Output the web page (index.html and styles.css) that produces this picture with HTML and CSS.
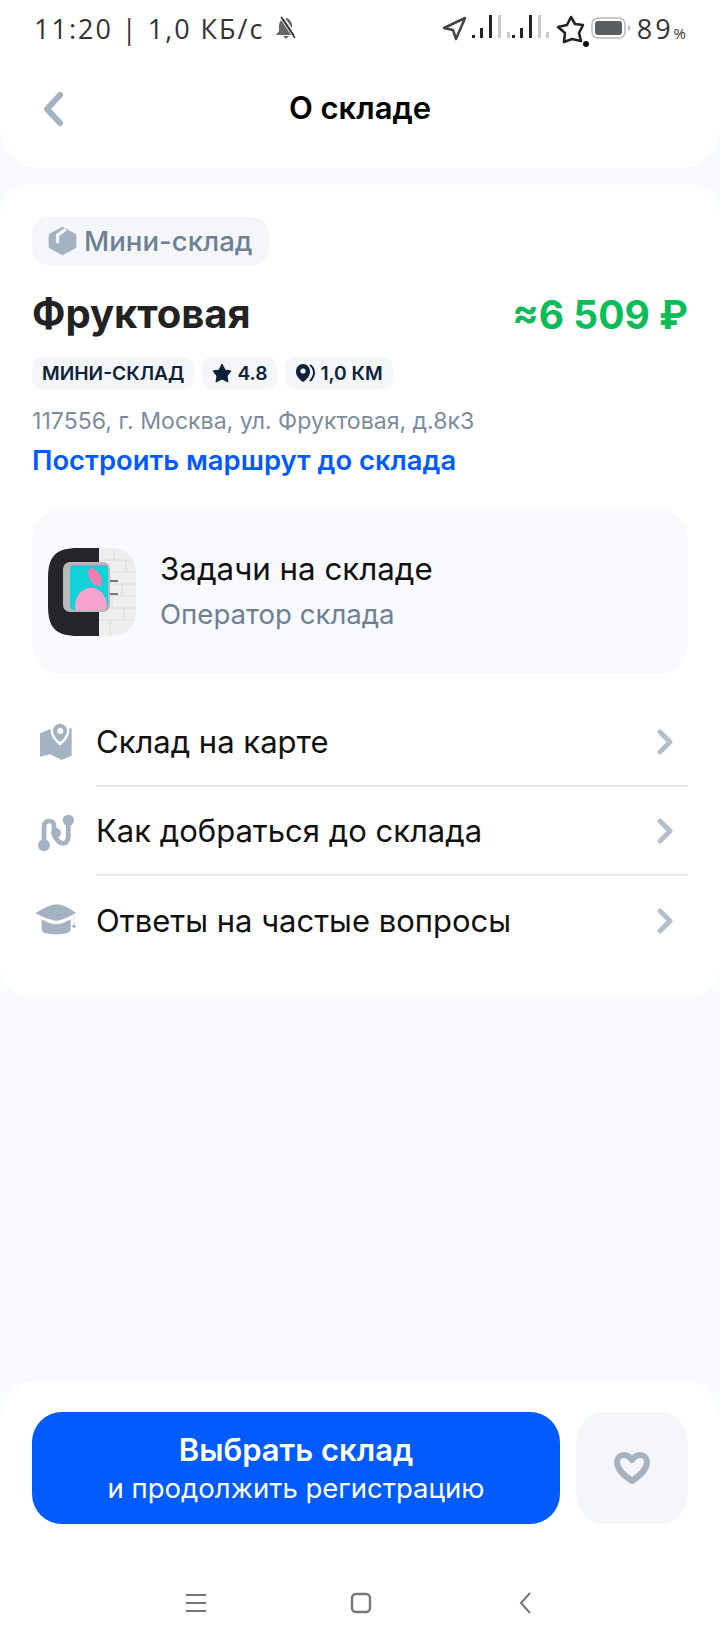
FILE: index.html
```html
<!DOCTYPE html>
<html>
<head>
  <title>О складе</title>
  <link rel="stylesheet" href="styles.css">
</head>
<body>
  <div class="top">
    <div class="status">
      <div class="status-left">
        <span class="status-text">11:20 | 1,0 КБ/с</span>
        <svg class="bell" width="22" height="24" viewBox="0 0 22 24"><path d="M10 2c-4 1-6 4-6 8v5l-3 4h19l-3-4v-5c0-4-2-7-6-8z" fill="#666"/><path d="M8 20h6l-3 3z" fill="#666"/><path d="M5 1l14 21M8 0l14 21" stroke="#fff" stroke-width="1.5"/><path d="M6 1l14 21" stroke="#333" stroke-width="1.5"/></svg>
      </div>
      <div class="status-right">
        <svg width="25" height="25" viewBox="0 0 25 25"><path d="M23 2L2 12l9 2 3 9z" fill="none" stroke="#444" stroke-width="2.5" stroke-linejoin="round"/></svg>
        <svg class="signal" width="78" height="26" viewBox="0 0 78 26">
          <g fill="#222"><rect x="1" y="20" width="3" height="3"/><rect x="9" y="13" width="3" height="10"/><rect x="18" y="0" width="3" height="23"/><rect x="41" y="20" width="3" height="3"/><rect x="49" y="13" width="3" height="10"/><rect x="58" y="0" width="3" height="23"/></g>
          <g fill="#ccc"><rect x="27" y="0" width="3" height="23"/><rect x="36" y="17" width="3" height="6"/><rect x="67" y="0" width="3" height="23"/><rect x="75" y="17" width="3" height="6"/></g>
        </svg>
        <svg class="star" width="36" height="34" viewBox="0 0 36 34"><path d="M16 3l4 7 8 1-4 8 2 8-9-2-8 3 1-9-7-6 9-2z" fill="none" stroke="#222" stroke-width="2.6" stroke-linejoin="round"/><circle cx="31" cy="30" r="3" fill="#111"/></svg>
        <svg class="battery" width="40" height="22" viewBox="0 0 40 22"><rect x="1" y="1" width="33" height="20" rx="6" fill="#fff" stroke="#bbb" stroke-width="1.5"/><rect x="4" y="4" width="27" height="14" rx="3" fill="#585e62"/><path d="M37 8l3 3-3 3z" fill="#bbb"/></svg>
        <span class="status-text batt">89<small>%</small></span>
      </div>
    </div>
    <div class="head">
      <svg class="back" width="30" height="40" viewBox="0 0 30 40"><path d="M22 6L9 20l13 14" fill="none" stroke="#a4b2c1" stroke-width="6" stroke-linecap="round" stroke-linejoin="round"/></svg>
      <div class="head-title">О складе</div>
    </div>
  </div>

  <div class="card">
    <div class="chip">
      <svg width="29" height="30" viewBox="46 36 88 90"><path d="M90 38l38 20q4 2 4 7v32q0 5-4 7l-38 20-38-20q-4-2-4-7V65q0-5 4-7z" fill="#a4b2c1"/><path d="M100 46L75 63v24" fill="none" stroke="#f4f6fa" stroke-width="10"/></svg>
      <span>Мини-склад</span>
    </div>

    <div class="title-row">
      <div class="name">Фруктовая</div>
      <div class="price">≈6 509 ₽</div>
    </div>

    <div class="tags">
      <div class="tag">МИНИ-СКЛАД</div>
      <div class="tag">
        <svg width="20" height="20" viewBox="0 0 20 20"><path d="M10 1l3 6 6 1-4 5 1 6-6-3-6 3 1-6-4-5 6-1z" fill="#0d2238" stroke="#0d2238" stroke-linejoin="round"/></svg>
        4.8
      </div>
      <div class="tag">
        <svg width="20" height="20" viewBox="0 0 20 20"><path d="M8 1c4 0 7 3 7 8 0 4-4 8-7 10-3-2-7-6-7-10 0-5 3-8 7-8z" fill="#0d2238"/><circle cx="8" cy="8" r="2.6" fill="#f4f6fa"/><path d="M15 2c3 2 4 5 4 8s-2 6-4 8" fill="none" stroke="#0d2238" stroke-width="2"/></svg>
        1,0 КМ
      </div>
    </div>

    <div class="address">117556, г. Москва, ул. Фруктовая, д.8к3</div>
    <div class="route">Построить маршрут до склада</div>

    <div class="tasks">
      <svg class="app" width="88" height="88" viewBox="0 0 88 88">
        <defs>
          <clipPath id="squircle"><path d="M30 0h28c22 0 30 8 30 30v28c0 22-8 30-30 30H30C8 88 0 80 0 58V30C0 8 8 0 30 0z"/></clipPath>
          <clipPath id="panel"><rect x="22" y="17" width="38" height="45" rx="4"/></clipPath>
        </defs>
        <g clip-path="url(#squircle)">
          <rect width="51" height="88" fill="#232528"/>
          <rect x="51" width="37" height="88" fill="#eeeeee"/>
          <path d="M51 12h37M51 24h37M51 36h37M51 48h37M51 60h37M51 72h37M66 0v12M78 12v12M62 24v12M74 36v12M64 48v12M76 60v12M62 72v16" stroke="#dedede" stroke-width="1"/>
          <rect x="15" y="14" width="47" height="50" rx="7" fill="#b8b9ba"/>
          <rect x="62" y="32" width="8" height="2" fill="#777"/>
          <rect x="62" y="45" width="8" height="2" fill="#777"/>
          <rect x="22" y="17" width="38" height="45" rx="4" fill="#10d3da"/>
          <g clip-path="url(#panel)">
            <ellipse cx="43" cy="58" rx="16" ry="18" fill="#f6a3cd"/>
            <ellipse cx="47" cy="29" rx="5.5" ry="10" transform="rotate(-30 47 29)" fill="#ee7fb6"/>
          </g>
        </g>
      </svg>
      <div class="tasks-text">
        <div class="tasks-title">Задачи на складе</div>
        <div class="tasks-sub">Оператор склада</div>
      </div>
    </div>

    <div class="menu">
      <div class="row">
        <div class="row-icon">
          <svg width="40" height="55" viewBox="18 0 120 165"><path d="M30 55l30-12 65-3v82l-30 13-35-17-30 7z" fill="#a4b2c1"/><path d="M90 20a28 28 0 0 1 28 28c0 18-16 34-28 44-12-10-28-26-28-44a28 28 0 0 1 28-28z" fill="#fff"/><path d="M90 26a21 21 0 0 1 21 21c0 14-12 27-21 34-9-7-21-20-21-34a21 21 0 0 1 21-21z" fill="#a4b2c1"/><circle cx="91" cy="48" r="9" fill="#fff"/></svg>
        </div>
        <div class="row-body">
          <span>Склад на карте</span>
          <svg class="chev" width="20" height="28" viewBox="0 0 20 28"><path d="M5 4l10 10L5 24" fill="none" stroke="#b3c0cc" stroke-width="5" stroke-linecap="round" stroke-linejoin="round"/></svg>
        </div>
      </div>
      <div class="row">
        <div class="row-icon">
          <svg width="40" height="50" viewBox="18 0 120 150"><path d="M42 115V62q0-20 16-20t14 20v13q0 17 16 30 22 13 27-15V40" fill="none" stroke="#a4b2c1" stroke-width="14" stroke-linecap="round"/><circle cx="115" cy="40" r="17" fill="#a4b2c1"/><circle cx="42" cy="115" r="18" fill="#a4b2c1"/><circle cx="78" cy="78" r="15" fill="#a4b2c1"/></svg>
        </div>
        <div class="row-body">
          <span>Как добраться до склада</span>
          <svg class="chev" width="20" height="28" viewBox="0 0 20 28"><path d="M5 4l10 10L5 24" fill="none" stroke="#b3c0cc" stroke-width="5" stroke-linecap="round" stroke-linejoin="round"/></svg>
        </div>
      </div>
      <div class="row">
        <div class="row-icon">
          <svg width="44" height="50" viewBox="12 0 132 150"><path d="M15 52Q60 25 80 25t58 25Q110 68 78 75 45 68 15 52z" fill="#a4b2c1"/><path d="M35 70q25 15 43 15t44-15v30q0 15-44 15t-43-15z" fill="#a4b2c1"/><path d="M131 58l1 30" stroke="#cfd7df" stroke-width="2"/><circle cx="132" cy="91" r="5" fill="#a4b2c1"/></svg>
        </div>
        <div class="row-body">
          <span>Ответы на частые вопросы</span>
          <svg class="chev" width="20" height="28" viewBox="0 0 20 28"><path d="M5 4l10 10L5 24" fill="none" stroke="#b3c0cc" stroke-width="5" stroke-linecap="round" stroke-linejoin="round"/></svg>
        </div>
      </div>
    </div>
  </div>

  <div class="footer">
    <div class="actions">
      <div class="select-btn">
        <div class="select-main">Выбрать склад</div>
        <div class="select-sub">и продолжить регистрацию</div>
      </div>
      <div class="fav-btn">
        <svg width="38" height="34" viewBox="0 0 38 34"><path d="M19 30C12 25 4 19 4 11c0-4 3-7 7-7 4 0 6 2 8 5 2-3 4-5 8-5 4 0 7 3 7 7 0 8-8 14-15 19z" fill="none" stroke="#a4b2c1" stroke-width="6" stroke-linejoin="round"/></svg>
      </div>
    </div>
    <div class="navbar">
      <svg width="22" height="20" viewBox="0 0 22 20"><path d="M1 2h20M1 10h20M1 18h20" stroke="#777" stroke-width="2"/></svg>
      <svg class="nav-home" width="22" height="22" viewBox="0 0 22 22"><rect x="2" y="2" width="18" height="18" rx="4" fill="none" stroke="#777" stroke-width="2.4"/></svg>
      <svg width="12" height="22" viewBox="0 0 12 22"><path d="M11 1L2 11l9 10" fill="none" stroke="#777" stroke-width="2"/></svg>
    </div>
  </div>
</body>
</html>
```

FILE: styles.css
```css
* {
  box-sizing: border-box;
}

body {
  font-family: Inter, "Noto Sans", sans-serif;
  background-color: #f8faff;
  color: #111;
  display: flex;
  flex-direction: column;
  width: 720px;
  height: 1650px;
  margin: 0;
  overflow: hidden;
}

.top {
  background-color: white;
  height: 168px;
  border-radius: 0 0 40px 40px;
  flex-shrink: 0;
}

.status {
  display: flex;
  justify-content: space-between;
  align-items: center;
  height: 56px;
  padding: 0 34px;
}

.status-left,
.status-right {
  display: flex;
  align-items: center;
}

.status-text {
  font-family: "Open Sans", sans-serif;
  font-size: 27px;
  color: #333;
  letter-spacing: 2px;
}

.bell {
  margin-left: 11px;
}

.signal {
  margin-left: 4px;
}

.star {
  margin-left: 6px;
  margin-top: 6px;
}

.battery {
  margin-left: 0;
}

.batt {
  margin-left: 6px;
  letter-spacing: 3px;
}

.batt small {
  font-size: 15px;
  letter-spacing: 0;
}

.head {
  display: flex;
  justify-content: center;
  align-items: center;
  height: 106px;
  padding-bottom: 4px;
  position: relative;
}

.back {
  position: absolute;
  left: 38px;
  top: 33px;
}

.head-title {
  font-size: 31px;
  font-weight: 600;
  color: #000;
}

.card {
  background-color: white;
  margin-top: 17px;
  height: 812px;
  border-radius: 30px;
  padding: 32px 32px 0;
  flex-shrink: 0;
}

.chip {
  display: inline-flex;
  align-items: center;
  gap: 7px;
  height: 48px;
  padding: 0 16px;
  background-color: #f4f6fa;
  border-radius: 16px;
  font-size: 27.6px;
  font-weight: 500;
  color: #6e8092;
}

.title-row {
  display: flex;
  justify-content: space-between;
  align-items: center;
  margin-top: 22px;
  height: 52px;
}

.name {
  font-size: 40px;
  font-weight: 700;
  color: #222;
}

.price {
  margin-top: 3px;
  font-size: 39px;
  font-weight: 700;
  color: #0cbc58;
}

.tags {
  display: flex;
  gap: 8px;
  margin-top: 18px;
}

.tag {
  display: flex;
  align-items: center;
  gap: 5px;
  height: 32px;
  padding: 0 10px;
  background-color: #f4f6fa;
  border-radius: 10px;
  font-size: 19.2px;
  font-weight: 600;
  color: #0d2238;
}

.address {
  margin-top: 16px;
  font-size: 23.1px;
  line-height: 32px;
  color: #7c8c9c;
}

.route {
  margin-top: 7px;
  font-size: 27.4px;
  line-height: 32px;
  font-weight: 600;
  color: #005bff;
}

.tasks {
  display: flex;
  align-items: center;
  gap: 24px;
  height: 165px;
  margin-top: 33px;
  padding-left: 16px;
  background-color: #f8faff;
  border-radius: 30px;
}

.tasks-text {
  padding-bottom: 3px;
}

.tasks-title {
  font-size: 31.3px;
  line-height: 40px;
  color: #111;
}

.tasks-sub {
  margin-top: 7px;
  font-size: 27.6px;
  line-height: 36px;
  color: #6e8092;
}

.menu {
  margin-top: 24px;
}

.row {
  display: flex;
  align-items: center;
  height: 89px;
}

.row-icon {
  display: flex;
  justify-content: center;
  align-items: center;
  width: 48px;
  margin-right: 16px;
  flex-shrink: 0;
}

.row-body {
  display: flex;
  justify-content: space-between;
  align-items: center;
  flex: 1;
  height: 100%;
  font-size: 31px;
  color: #111;
  border-bottom: 2px solid #e3e8ee;
  padding-right: 13px;
}

.row:last-child .row-body {
  border-bottom: none;
}

.footer {
  margin-top: auto;
  height: 270px;
  background-color: white;
  border-radius: 40px 40px 0 0;
  padding: 32px 32px 0;
  flex-shrink: 0;
}

.actions {
  display: flex;
  gap: 16px;
}

.select-btn {
  display: flex;
  flex-direction: column;
  justify-content: center;
  align-items: center;
  flex: 1;
  height: 112px;
  background-color: #005bff;
  border-radius: 30px;
  color: white;
}

.select-main {
  font-size: 31px;
  font-weight: 600;
  line-height: 40px;
}

.select-sub {
  font-size: 27.5px;
  line-height: 36px;
}

.fav-btn {
  display: flex;
  justify-content: center;
  align-items: center;
  width: 112px;
  height: 112px;
  background-color: #f4f6fa;
  border-radius: 30px;
}

.navbar {
  display: flex;
  align-items: center;
  gap: 143px;
  margin-top: 68px;
  padding-left: 153px;
}

.nav-home {
  margin-right: 4px;
}
```
